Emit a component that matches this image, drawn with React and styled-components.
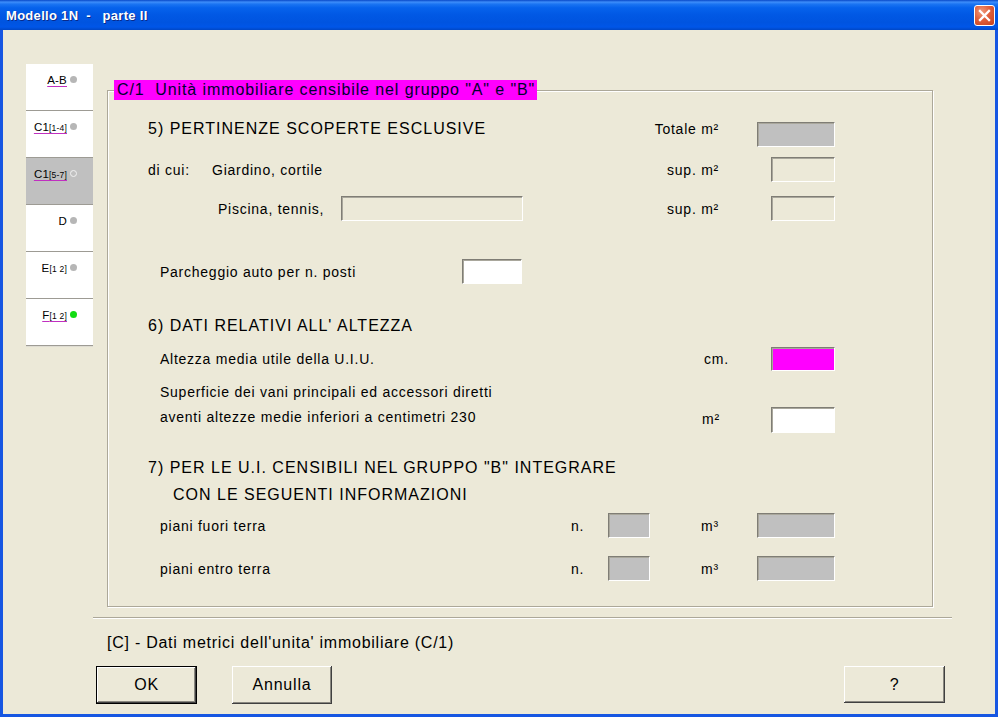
import React from "react";
import styled, { createGlobalStyle } from "styled-components";

const Global = createGlobalStyle`
  html, body { margin: 0; padding: 0; background: #ECE9D8; }
  body { font-family: "Liberation Sans", Arial, sans-serif; color: #000; }
  * { box-sizing: border-box; }
`;

const Window = styled.div`
  width: 998px;
  height: 717px;
  display: flex;
  flex-direction: column;
  overflow: hidden;
  background: #ECE9D8;
`;

const TitleBar = styled.div`
  height: 30px;
  flex: none;
  display: flex;
  align-items: center;
  justify-content: space-between;
  padding: 1px 3px 0 6px;
  background: linear-gradient(
    to bottom,
    #0848c8 0%,
    #3d8dfa 7%,
    #1a74f2 14%,
    #0662ec 26%,
    #0158e4 50%,
    #0054e0 75%,
    #0056e8 90%,
    #0047c6 100%
  );
`;

const Title = styled.span`
  color: #fff;
  font: bold 13px "Liberation Sans", Arial, sans-serif;
  letter-spacing: 0.3px;
  white-space: pre;
  text-shadow: 1px 1px 0 #0a2a8a;
`;

const CloseButton = styled.div`
  width: 21px;
  height: 21px;
  border: 1px solid #fff;
  border-radius: 3px;
  background: radial-gradient(circle at 35% 30%, #f09a7c 0%, #e0603c 45%, #c5401c 100%);
  display: flex;
  align-items: center;
  justify-content: center;
`;

const Body = styled.div`
  flex: 1;
  display: flex;
  flex-direction: column;
  border: 3px solid #1656e2;
  border-top: none;
  padding-left: 23px;
`;

const MainRow = styled.div`
  display: flex;
  align-items: flex-start;
  margin-top: 34px;
`;

const TabColumn = styled.div`
  width: 67px;
  display: flex;
  flex-direction: column;
`;

const Tab = styled.div`
  height: 47px;
  background: ${(p) => (p.$active ? "#C0C0C0" : "#FFFFFF")};
  border-bottom: 1px solid #9d9b94;
  box-shadow: 0 1px 0 #dedcd2;
  display: flex;
  justify-content: flex-end;
  align-items: flex-start;
  padding: 9px 16px 0 0;
  gap: 3px;
`;

const TabText = styled.span`
  font-size: 11.5px;
  line-height: 14px;
  letter-spacing: 0.2px;
  text-decoration: ${(p) => (p.$plain ? "none" : "underline")};
  text-decoration-color: #c030c0;
  text-underline-offset: 2px;
`;

const TabSub = styled.span`
  font-size: 8.5px;
`;

const Dot = styled.span`
  width: 7px;
  height: 7px;
  margin-top: 3px;
  border-radius: 50%;
  background: ${(p) =>
    p.$kind === "green" ? "#12dc12" : p.$kind === "hollow" ? "transparent" : "#b6b6b6"};
  border: ${(p) => (p.$kind === "hollow" ? "1px solid #f2f2f2" : "none")};
`;

const GroupBox = styled.div`
  margin-left: 14px;
  margin-top: 26px;
  width: 826px;
  height: 517px;
  border: 1px solid #aca899;
  box-shadow: 1px 1px 0 #fff, inset 1px 1px 0 #fff;
  display: flex;
  flex-direction: column;
`;

const Legend = styled.div`
  align-self: flex-start;
  margin: -11px 0 0 6px;
  height: 20px;
  line-height: 20px;
  padding: 0 2px 0 3px;
  background: #ff00ff;
  color: #000030;
  font-size: 16px;
  letter-spacing: 0.9px;
  white-space: pre;
`;

const Row = styled.div`
  display: flex;
  align-items: ${(p) => p.$align || "center"};
  height: ${(p) => p.$h}px;
  margin-top: ${(p) => p.$mt}px;
  padding-right: 97px;
`;

const Spacer = styled.div`
  flex: 1;
`;

const Heading = styled.div`
  margin-left: ${(p) => p.$ml || 0}px;
  font-size: 16px;
  line-height: ${(p) => p.$lh || 20}px;
  letter-spacing: 1px;
  white-space: pre;
`;

const HeadingBlock = styled.div`
  display: flex;
  flex-direction: column;
`;

const Label = styled.div`
  margin-left: ${(p) => p.$ml || 0}px;
  width: ${(p) => (p.$w ? `${p.$w}px` : "auto")};
  flex: none;
  text-align: ${(p) => (p.$right ? "right" : "left")};
  align-self: ${(p) => p.$self || "auto"};
  font-size: 14px;
  line-height: ${(p) => p.$lh || 18}px;
  letter-spacing: 0.75px;
  white-space: pre;
`;

const TextBlock = styled.div`
  margin-left: ${(p) => p.$ml || 0}px;
  font-size: 14px;
  line-height: 25px;
  letter-spacing: 0.75px;
  white-space: pre;
`;

const tones = {
  gray: "#C0C0C0",
  beige: "#ECE9D8",
  white: "#FFFFFF",
  magenta: "#FF00FF",
};

const Field = styled.div`
  flex: none;
  width: ${(p) => p.$w}px;
  height: ${(p) => p.$h || 25}px;
  margin-left: ${(p) => p.$ml || 0}px;
  align-self: ${(p) => p.$self || "auto"};
  background: ${(p) => tones[p.$tone]};
  border-style: solid;
  border-width: 1px;
  border-color: #7f7d75 #ffffff #ffffff #7f7d75;
  box-shadow: inset 1px 1px 0 #a9a79c;
`;

const Separator = styled.div`
  margin-left: 67px;
  margin-top: 10px;
  width: 859px;
  height: 2px;
  border-top: 1px solid #aca899;
  border-bottom: 1px solid #fff;
`;

const Caption = styled.div`
  margin-left: 81px;
  margin-top: 14px;
  font-size: 16px;
  line-height: 20px;
  letter-spacing: 0.75px;
`;

const ButtonRow = styled.div`
  display: flex;
  margin-top: 13px;
  margin-left: 70px;
`;

const Button = styled.button`
  width: ${(p) => p.$w}px;
  height: ${(p) => p.$h || 38}px;
  margin-left: ${(p) => p.$ml || 0}px;
  padding: 0;
  background: #ece9d8;
  border: ${(p) => (p.$default ? "1px solid #000" : "none")};
  box-shadow: inset -1px -1px 0 #404040, inset 1px 1px 0 #fff, inset -2px -2px 0 #8a8880;
  font-family: "Liberation Sans", Arial, sans-serif;
  font-size: 16px;
  letter-spacing: 0.8px;
  color: #000;
`;

const tabs = [
  { main: "A-B", sub: null, dot: "gray" },
  { main: "C1", sub: "[1-4]", dot: "gray" },
  { main: "C1", sub: "[5-7]", dot: "hollow", active: true },
  { main: "D", sub: null, dot: "gray", plain: true },
  { main: "E", sub: "[1 2]", dot: "gray", plain: true },
  { main: "F", sub: "[1 2]", dot: "green" },
];

export default function App() {
  return (
    <Window>
      <Global />
      <TitleBar>
        <Title>Modello 1N  -   parte II</Title>
        <CloseButton>
          <svg width="13" height="13" viewBox="0 0 13 13">
            <path d="M2 2 L11 11 M11 2 L2 11" stroke="#fff" strokeWidth="2.3" strokeLinecap="square" />
          </svg>
        </CloseButton>
      </TitleBar>
      <Body>
        <MainRow>
          <TabColumn>
            {tabs.map((t, i) => (
              <Tab key={i} $active={t.active}>
                <TabText $plain={t.plain}>
                  {t.main}
                  {t.sub && <TabSub>{t.sub}</TabSub>}
                </TabText>
                <Dot $kind={t.dot} />
              </Tab>
            ))}
          </TabColumn>
          <GroupBox>
            <Legend>C/1  Unità immobiliare censibile nel gruppo "A" e "B"</Legend>

            <Row $h={25} $mt={22} $align="flex-start">
              <Heading $ml={40} $lh={14}>5) PERTINENZE SCOPERTE ESCLUSIVE</Heading>
              <Spacer />
              <Label $w={100} $right $lh={15}>Totale m²</Label>
              <Field $w={78} $ml={38} $tone="gray" />
            </Row>

            <Row $h={25} $mt={10}>
              <Label $ml={40} $w={64}>di cui:</Label>
              <Label>Giardino, cortile</Label>
              <Spacer />
              <Label $w={100} $right>sup. m²</Label>
              <Field $w={64} $ml={52} $tone="beige" />
            </Row>

            <Row $h={25} $mt={14}>
              <Label $ml={110} $w={123}>Piscina, tennis,</Label>
              <Field $w={182} $tone="beige" />
              <Spacer />
              <Label $w={100} $right>sup. m²</Label>
              <Field $w={64} $ml={52} $tone="beige" />
            </Row>

            <Row $h={25} $mt={38}>
              <Label $ml={52} $w={302}>Parcheggio auto per n. posti</Label>
              <Field $w={60} $tone="white" />
            </Row>

            <Row $h={20} $mt={32}>
              <Heading $ml={40}>6) DATI RELATIVI ALL' ALTEZZA</Heading>
            </Row>

            <Row $h={24} $mt={11}>
              <Label $ml={52}>Altezza media utile della U.I.U.</Label>
              <Spacer />
              <Label $w={67}>cm.</Label>
              <Field $w={64} $h={24} $tone="magenta" />
            </Row>

            <Row $h={53} $mt={9} $align="flex-start">
              <TextBlock $ml={52}>
                Superficie dei vani principali ed accessori diretti
                <br />
                aventi altezze medie inferiori a centimetri 230
              </TextBlock>
              <Spacer />
              <Label $w={69} $self="flex-end" $lh={28}>m²</Label>
              <Field $w={64} $h={26} $self="flex-end" $tone="white" />
            </Row>

            <Row $h={54} $mt={21} $align="flex-start">
              <HeadingBlock>
                <Heading $ml={40} $lh={27}>7) PER LE U.I. CENSIBILI NEL GRUPPO "B" INTEGRARE</Heading>
                <Heading $ml={65} $lh={27}>CON LE SEGUENTI INFORMAZIONI</Heading>
              </HeadingBlock>
            </Row>

            <Row $h={25} $mt={5}>
              <Label $ml={52}>piani fuori terra</Label>
              <Spacer />
              <Label $w={37}>n.</Label>
              <Field $w={42} $tone="gray" />
              <Label $ml={51} $w={56}>m³</Label>
              <Field $w={78} $tone="gray" />
            </Row>

            <Row $h={25} $mt={18}>
              <Label $ml={52}>piani entro terra</Label>
              <Spacer />
              <Label $w={37}>n.</Label>
              <Field $w={42} $tone="gray" />
              <Label $ml={51} $w={56}>m³</Label>
              <Field $w={78} $tone="gray" />
            </Row>
          </GroupBox>
        </MainRow>

        <Separator />
        <Caption>[C] - Dati metrici dell'unita' immobiliare (C/1)</Caption>

        <ButtonRow>
          <Button $w={101} $default>OK</Button>
          <Button $w={100} $ml={35}>Annulla</Button>
          <Button $w={101} $h={37} $ml={512}>?</Button>
        </ButtonRow>
      </Body>
    </Window>
  );
}
